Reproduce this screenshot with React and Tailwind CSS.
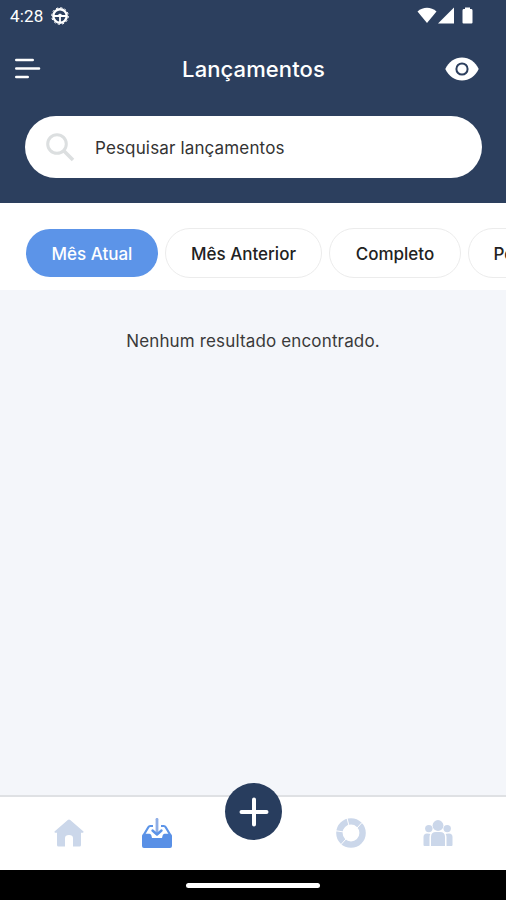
import React, { useState } from 'react';

const tabs = [
  { label: 'Mês Atual', width: 'w-[132px]' },
  { label: 'Mês Anterior', width: 'w-[157px]' },
  { label: 'Completo', width: 'w-[132px]' },
  { label: 'Período', width: 'w-[114px]' },
];

function StatusBar() {
  return (
    <div className="h-8 flex items-center justify-between pl-[10px] pr-[32px]">
      <div className="flex items-center gap-[7px]">
        <span className="font-[Roboto] text-[17px] leading-8 w-[34px] whitespace-nowrap tracking-[0.15px]">4:28</span>
        <svg width="18" height="18" viewBox="0 0 18 18" fill="none" stroke="currentColor">
          <circle cx="9" cy="9" r="6.7" strokeWidth="2.4" />
          <circle cx="9" cy="9" r="8.300" strokeWidth="1" strokeDasharray="2.200 2.146" />
          <path d="M3 9h12M9 9v6" strokeWidth="1.800" />
          <path d="M6 8.500L9 6.500L12 8.500z" fill="currentColor" stroke="none" />
        </svg>
      </div>
      <svg width="57" height="18" viewBox="0 0 57 18" fill="currentColor">
        <path d="M0.500 4.500C6 -0.400 14 -0.400 19.500 4.500L10 16z" />
        <path d="M37 0.500V16.500H21z" />
        <path d="M48 0.500h5v1.500h1.500q1 0 1 1.500v12q0 1-1 1h-8q-1 0-1-1v-12q0-1.500 1-1.500H48z" />
      </svg>
    </div>
  );
}

function Header() {
  return (
    <header className="h-[203px] bg-[#2c3f5e] text-white">
      <StatusBar />
      <div className="h-[73px] flex items-center justify-between pl-[15px] pr-[27px]">
        <button className="w-[33px]" aria-label="Menu">
          <svg width="26" height="21" viewBox="0 0 26 21" stroke="currentColor" strokeWidth="2.6" strokeLinecap="round">
            <path d="M1.300 2H17.700M1.300 10.500H24M1.300 19H12.700" />
          </svg>
        </button>
        <h1 className="text-[22px] font-medium leading-7 pl-[14px] tracking-[0.1px]">Lançamentos</h1>
        <button aria-label="Mostrar valores">
          <svg width="34" height="24" viewBox="0 0 34 24" fill="none">
            <path d="M0.300 12C3.500 4.800 10 0.500 17 0.500S30.500 4.800 33.700 12C30.500 19.200 24 23.500 17 23.500S3.500 19.200 0.300 12z" fill="white" />
            <circle cx="17" cy="12" r="5.600" stroke="#2c3f5e" strokeWidth="2" />
          </svg>
        </button>
      </div>
      <label className="mt-[11px] ml-[25px] mr-6 h-[62px] bg-white rounded-full flex items-center pl-[21px] gap-[20px]">
        <svg width="29" height="29" viewBox="0 0 29 29" fill="none" stroke="#dcdfe0">
          <circle cx="11" cy="11" r="9.300" strokeWidth="3" />
          <path d="M17.500 17.500L27 27" strokeWidth="3.600" />
        </svg>
        <span className="text-[17px] text-[#333] tracking-[0.15px] pt-[3px]">Pesquisar lançamentos</span>
      </label>
    </header>
  );
}

function Tabs() {
  const [active, setActive] = useState(0);

  return (
    <div className="h-[87px] bg-white flex items-center pt-[13px] pb-[1px] pl-[26px] gap-[7px] overflow-hidden shrink-0">
      {tabs.map((tab, index) => (
        <button
          key={tab.label}
          onClick={() => setActive(index)}
          className={`${tab.width} shrink-0 rounded-full text-[17px] font-medium pt-[5px] ${
            index === active ? 'h-12 bg-[#5c94e8] text-white' : 'h-[50px] border border-[#ececec] text-[#222]'
          }`}
        >
          {tab.label}
        </button>
      ))}
    </div>
  );
}

function BottomNav() {
  return (
    <nav className="relative h-[75px] bg-white border-t-2 border-[#dfe1e4] shrink-0">
      <div className="h-full flex items-center justify-between pl-[54px] pr-[53px] pb-[1px] text-[#cbd7ea]">
        <div className="flex gap-[58px]">
          <button aria-label="Início">
            <svg width="30" height="30" viewBox="0 0 30 30" fill="currentColor">
              <path d="M13.800 2Q15 1 16.200 2L29.500 13.500Q30 14.500 28.800 14.800H27V27q0 1.500-1.500 1.500H19V20q0-3-4-3t-4 3v8.500H4.500Q3 28.500 3 27V14.800H1.200Q0 14.500 0.500 13.500z" />
            </svg>
          </button>
          <button aria-label="Lançamentos">
            <svg width="30" height="30" viewBox="0 0 30 30" fill="none">
              <path d="M0.500 16.500Q1 15.800 2 15.800H7.500Q8.800 15.800 9.300 17.300L10 20H20L20.700 17.300Q21.200 15.800 22.500 15.800H28Q29 15.800 29.500 16.500Q30 17 30 18V28q0 2-2 2H2Q0 30 0 28V18Q0 17 0.500 16.500z" fill="#5990e6" />
              <path d="M11 8H8.200Q7 8 6.300 9.200L2 16.500M19 8h2.800Q23 8 23.700 9.200L28 16.500" stroke="#5c94e8" strokeWidth="2.200" />
              <path d="M15 1.300V15" stroke="#8faee6" strokeWidth="2.800" strokeLinecap="round" />
              <path d="M10.500 12.500L15 16.500L19.500 12.500" stroke="#5c94e8" strokeWidth="2.400" strokeLinecap="round" strokeLinejoin="round" />
            </svg>
          </button>
        </div>
        <div className="flex gap-[57px]">
          <button aria-label="Relatórios">
            <svg width="30" height="30" viewBox="0 0 30 30" fill="none">
              <circle cx="15" cy="15" r="11.600" stroke="currentColor" strokeWidth="6.400" />
              <path d="M13 8L11 0M21 10L26 4.500M8 14L0 12.800M10 21L5 26.500" stroke="white" strokeWidth="1" />
            </svg>
          </button>
          <button aria-label="Pessoas">
            <svg width="30" height="30" viewBox="0 0 30 30" fill="currentColor">
              <circle cx="15" cy="7.500" r="5.400" />
              <circle cx="5.800" cy="10.600" r="3.700" />
              <circle cx="24.200" cy="10.600" r="3.700" />
              <path d="M8 28V19q0-5 5-5h4q5 0 5 5v9zM6.500 28H1.500Q0.500 28 0.500 27V19q0-3.500 3.500-3.500 3 0 3.300.6Q6.500 17.500 6.500 19zM23.500 28h5q1 0 1-1V19q0-3.500-3.500-3.500-3 0-3.300.6.800 1.400.800 2.900z" />
            </svg>
          </button>
        </div>
      </div>
      <button
        aria-label="Adicionar"
        className="absolute left-[225px] -top-[14px] size-[57px] rounded-full bg-[#283d5e] flex items-center justify-center"
      >
        <svg width="30" height="30" viewBox="0 0 30 30" stroke="white" strokeWidth="4" strokeLinecap="round">
          <path d="M15 2.500V27.500M2.500 15H27.500" />
        </svg>
      </button>
    </nav>
  );
}

export default function App() {
  return (
    <div className="w-[506px] h-[900px] flex flex-col overflow-hidden bg-[#f4f6fa] font-[Inter,sans-serif]">
      <Header />
      <Tabs />
      <main className="flex-1 pt-[39px] text-center text-[17px] leading-6 tracking-[0.15px] text-[#3a3a3a]">
        Nenhum resultado encontrado.
      </main>
      <BottomNav />
      <div className="h-[30px] bg-black flex justify-center pt-[13px] shrink-0">
        <div className="w-[134px] h-[5px] rounded-full bg-white" />
      </div>
    </div>
  );
}
